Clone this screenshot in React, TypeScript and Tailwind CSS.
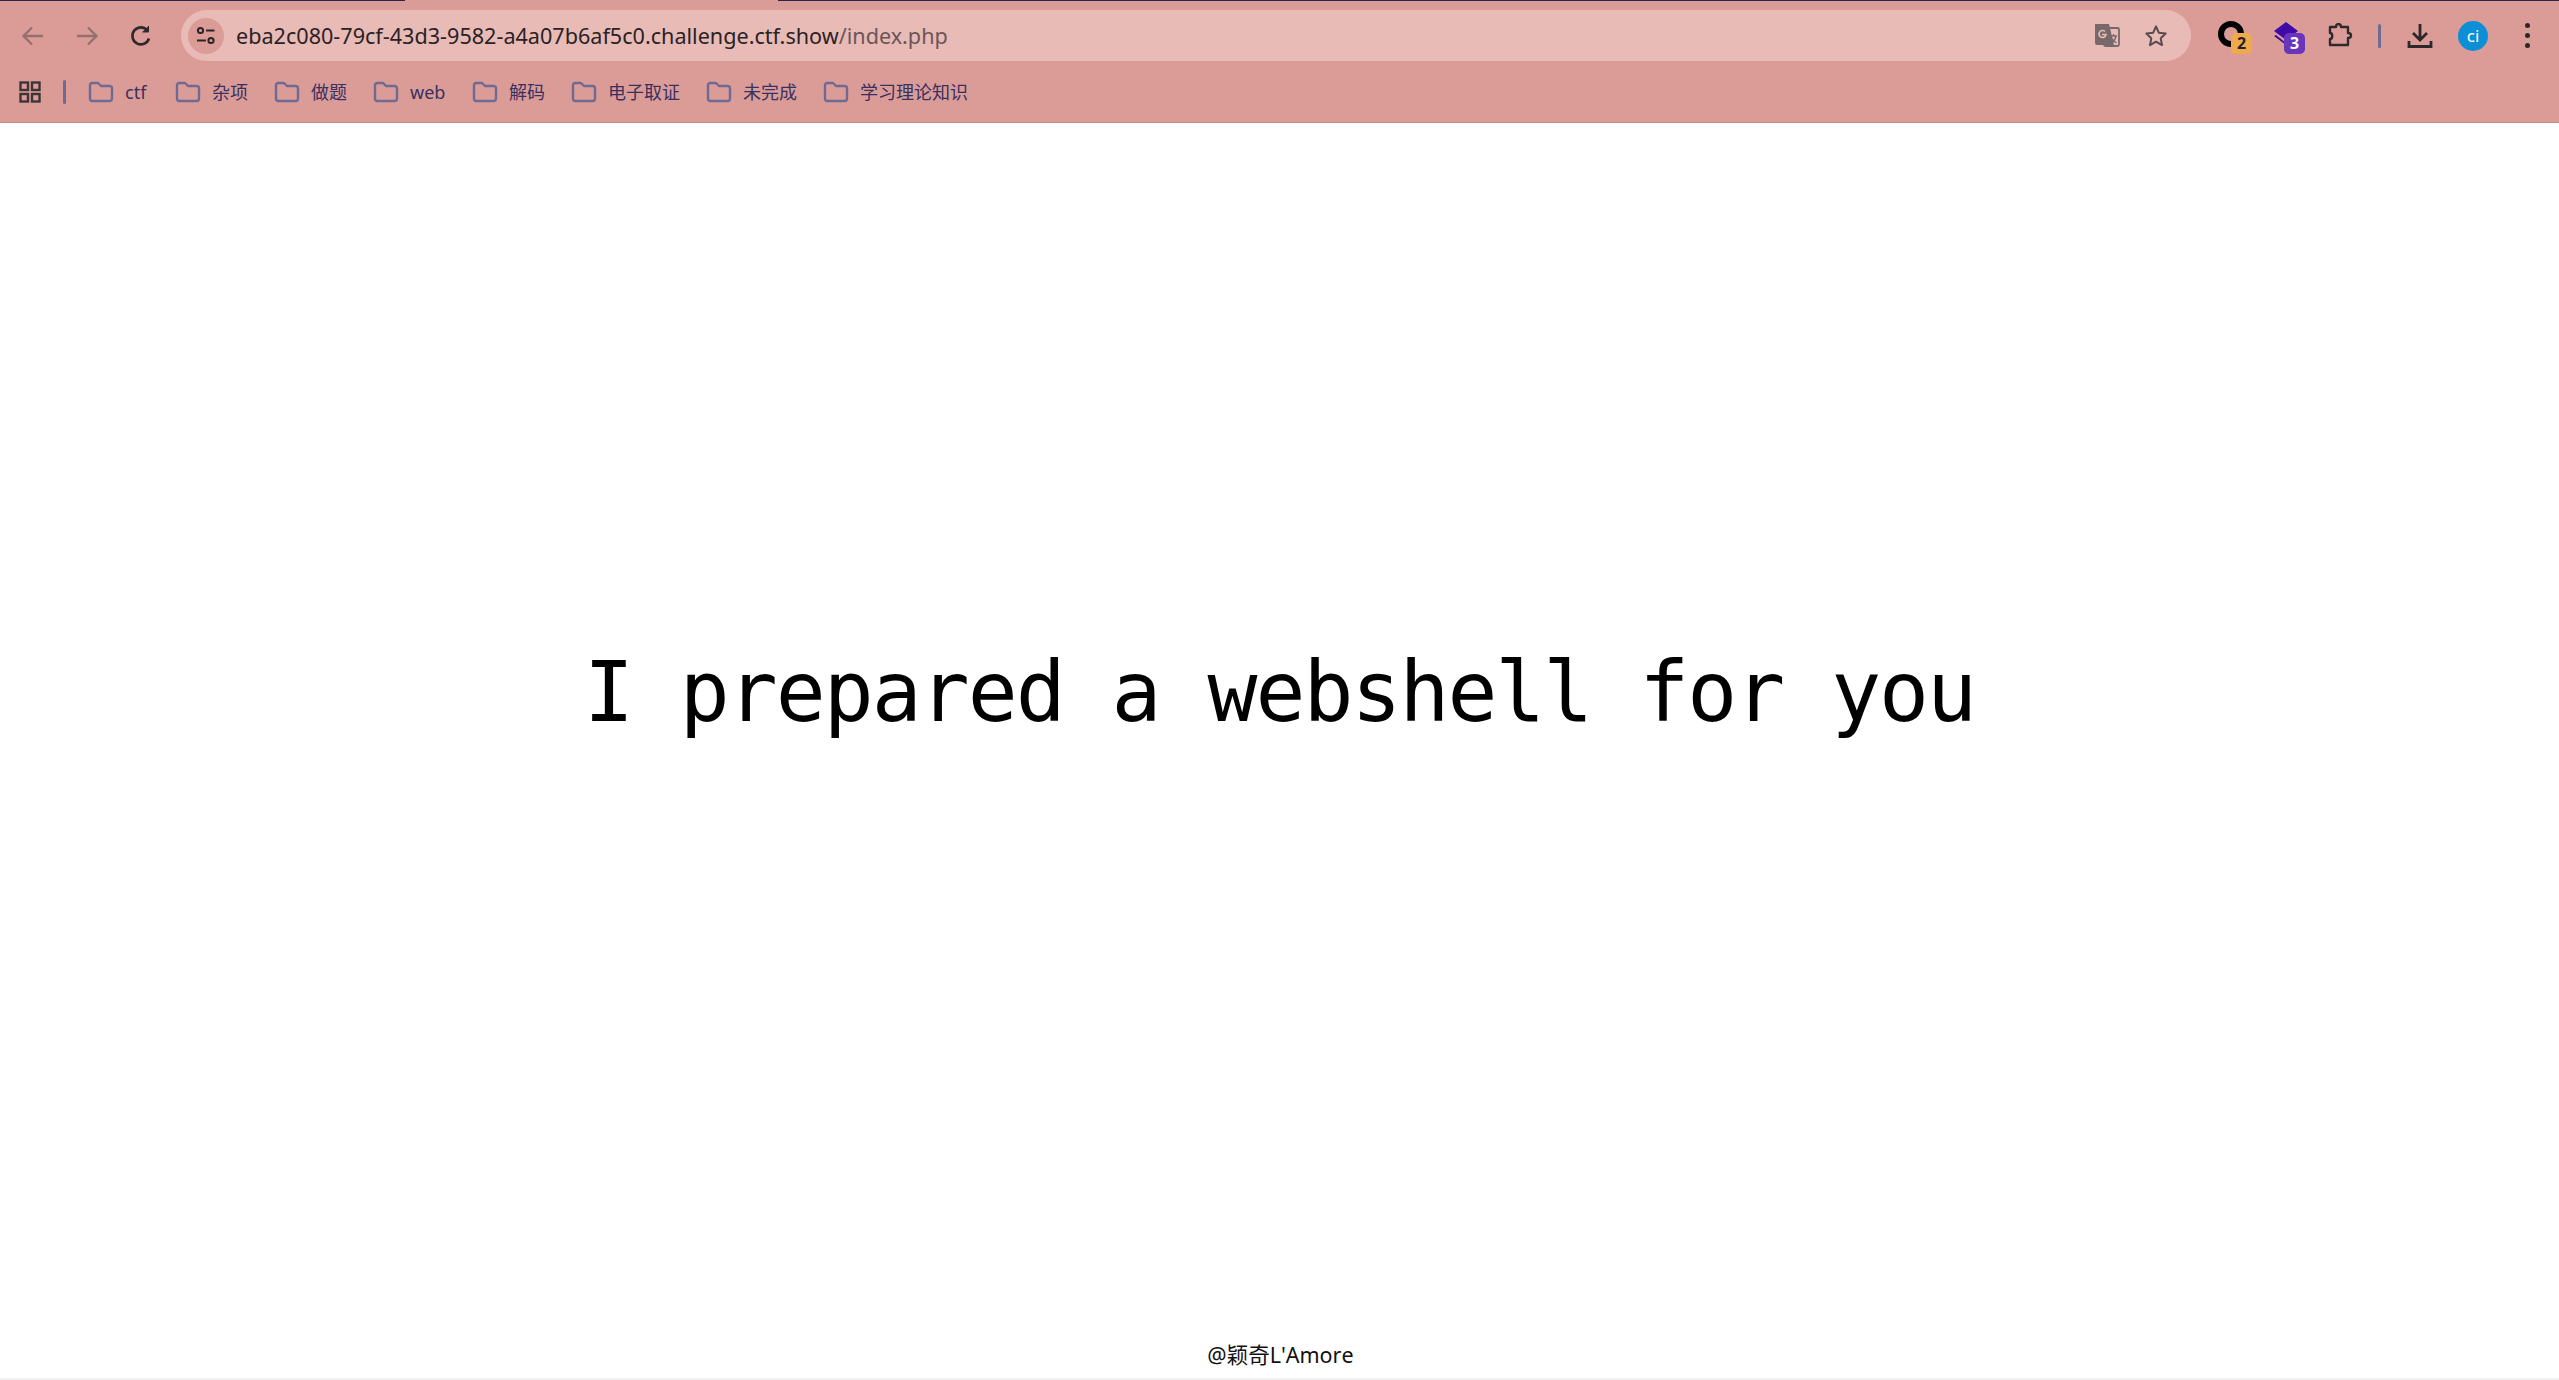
import React from 'react';

const FolderIcon = () => (
  <svg width="26" height="22" viewBox="0 0 26 22" fill="none" stroke="#6f6a92" strokeWidth="2.4" strokeLinejoin="round">
    <path d="M2 4.5C2 3 3 2 4.5 2H10l3 3h8.5C23 5 24 6 24 7.5v10c0 1.500-1 2.500-2.500 2.500h-17C3 20 2 19 2 17.500z" />
  </svg>
);

const Bookmark = ({ label, width }: { label: string; width: string }) => (
  <div className={`flex items-center gap-[11px] ${width}`}>
    <FolderIcon />
    <span className="pt-[2px] text-[18px] text-[#38305f]">{label}</span>
  </div>
);

const bookmarks = [
  { label: 'ctf', width: 'w-[87px]' },
  { label: '杂项', width: 'w-[99px]' },
  { label: '做题', width: 'w-[99px]' },
  { label: 'web', width: 'w-[99px]' },
  { label: '解码', width: 'w-[99px]' },
  { label: '电子取证', width: 'w-[135px]' },
  { label: '未完成', width: 'w-[117px]' },
  { label: '学习理论知识', width: 'w-[160px]' },
];

const Badge = ({ n, className }: { n: string; className: string }) => (
  <span className={`absolute top-[12px] flex h-[21px] w-[21px] items-center justify-center rounded-[5px] text-[16px] font-bold ${className}`}>
    {n}
  </span>
);

export default function App() {
  return (
    <div className="flex h-[1380px] flex-col bg-white font-['Noto_Sans','Noto_Sans_CJK_SC',sans-serif]">
      {/* browser chrome */}
      <div className="h-[123px] flex-none border-b border-[#c98585] bg-[#db9c98]">
        <div className="flex h-[1px]">
          <div className="w-[405px] bg-[#2a2450]" />
          <div className="w-[373px]" />
          <div className="flex-1 bg-[#2a2450]" />
        </div>
        <div className="flex h-[60px] items-center pt-[9px]">
          <div className="flex w-[181px] items-center pl-[20px]">
            <svg width="26" height="26" viewBox="0 0 26 26" fill="none" stroke="#96706e" strokeWidth="2.4">
              <path d="M23 13H4M12 4.500 3.500 13l8.500 8.500" />
            </svg>
            <svg className="ml-[28px]" width="26" height="26" viewBox="0 0 26 26" fill="none" stroke="#96706e" strokeWidth="2.4">
              <path d="M3 13h19M14 4.500 22.500 13 14 21.500" />
            </svg>
            <svg className="ml-[28px]" width="26" height="26" viewBox="0 0 26 26" fill="none" stroke="#2e2a2c" strokeWidth="2.600">
              <path d="M21 15.500A8.500 8.500 0 1 1 19.500 7.500" />
              <path d="M20.500 3v6h-6" fill="#2e2a2c" strokeWidth="1" />
            </svg>
          </div>

          <div className="flex h-[51px] w-[2010px] items-center rounded-full bg-[#e8bbb7] pl-[7px] pr-[23px]">
            <div className="flex h-[36px] w-[36px] items-center justify-center rounded-full bg-[#db9c98]">
              <svg width="20" height="20" viewBox="0 0 20 20" fill="none" stroke="#2a2526" strokeWidth="2">
                <circle cx="4.500" cy="4.500" r="2.600" />
                <path d="M10 4.500h8.500M1 14.500h9" />
                <circle cx="15" cy="14.500" r="2.600" />
              </svg>
            </div>
            <div className="ml-[12px] flex-1 text-[21.600px] leading-none text-[#2b2224]">
              eba2c080-79cf-43d3-9582-a4a07b6af5c0.challenge.ctf.show<span className="text-[#6d5557]">/index.php</span>
            </div>
            <svg width="26" height="26" viewBox="0 0 26 26">
              <rect x="10" y="5" width="15" height="18" rx="1.500" fill="none" stroke="#77686a" strokeWidth="1.800" />
              <path d="M1 1h14l5 21H3a2 2 0 0 1-2-2z" fill="#77686a" />
              <path d="M11 8.500a3.500 3.500 0 1 0 1 3H8" fill="none" stroke="#e8bbb7" strokeWidth="1.700" />
              <path d="M16 13h7M19.500 11v2M22 13c-1 4-3 6-5 7M17.500 15c1 2 3 4 5 5" fill="none" stroke="#77686a" strokeWidth="1.300" />
            </svg>
            <svg className="ml-[24px]" width="24" height="24" viewBox="0 0 24 24" fill="none" stroke="#5a4a4c" strokeWidth="2" strokeLinejoin="round">
              <path d="m12 2.500 2.900 6.300 6.800.8-5 4.700 1.300 6.800-6-3.400-6 3.400 1.300-6.800-5-4.700 6.800-.8z" />
            </svg>
          </div>

          <div className="ml-[27px] flex items-center">
            <div className="relative h-[30px] w-[30px]">
              <div className="h-[26px] w-[26px] rounded-full border-[6px] border-black" />
              <Badge n="2" className="left-[13px] bg-[#eeaa4c] text-[#222]" />
            </div>
            <div className="relative ml-[25px] h-[30px] w-[30px]">
              <svg width="26" height="26" viewBox="0 0 26 26">
                <path d="M13 1 25 10 13 19 1 10z" fill="#3f0aa8" />
                <path d="M3 14 13 22l10-8v4L13 24 1 15z" fill="#35118f" />
              </svg>
              <Badge n="3" className="left-[11px] bg-[#6a35bd] text-white" />
            </div>
            <svg className="ml-[24px]" width="26" height="26" viewBox="0 0 26 26" fill="none" stroke="#2f2b2d" strokeWidth="2.400" strokeLinejoin="round">
              <path d="M3 4h6c0-4 5-4 5 0h7v6c4 0 4 5 0 5v7H3v-6c3 0 3-6 0-6z" />
            </svg>
            <div className="ml-[25px] h-[24px] w-[3px] rounded bg-[#6f6a92]" />
            <svg className="ml-[26px]" width="26" height="26" viewBox="0 0 26 26" fill="none" stroke="#2c2829" strokeWidth="2.800">
              <path d="M13 1v15M6 10l7 7 7-7M2 18v5.500h22V18" />
            </svg>
            <div className="ml-[25px] flex h-[30px] w-[30px] items-center justify-center rounded-full bg-[#0c8fd6] text-[17px] text-white">
              ci
            </div>
            <div className="ml-[37px] flex flex-col gap-[5px]">
              <span className="h-[5px] w-[5px] rounded-full bg-[#2c2829]" />
              <span className="h-[5px] w-[5px] rounded-full bg-[#2c2829]" />
              <span className="h-[5px] w-[5px] rounded-full bg-[#2c2829]" />
            </div>
          </div>
        </div>

        {/* bookmarks bar */}
        <div className="flex h-[60px] items-center pl-[19px] pt-[1px]">
          <svg width="22" height="22" viewBox="0 0 22 22" fill="none" stroke="#3b3537" strokeWidth="2.400">
            <rect x="1.500" y="1.500" width="7.500" height="7.500" />
            <rect x="13" y="1.500" width="7.500" height="7.500" />
            <rect x="1.500" y="13" width="7.500" height="7.500" />
            <rect x="13" y="13" width="7.500" height="7.500" />
          </svg>
          <div className="ml-[22px] mr-[22px] h-[24px] w-[3px] rounded bg-[#6f6a92]" />
          {bookmarks.map((b) => (
            <Bookmark key={b.label} label={b.label} width={b.width} />
          ))}
        </div>
      </div>

      {/* page */}
      <div className="flex flex-1 items-center justify-center pb-[61px]">
        <h1 className="font-['DejaVu_Sans_Mono',monospace] text-[83px] font-normal leading-none tracking-[-2px] text-black">
          I prepared a webshell for you
        </h1>
      </div>
      <div className="flex h-[58px] flex-none justify-center border-b-2 border-[#f2f2f2] pt-[18px] pl-[2px] text-[21.500px] leading-[30px] text-[#111] [font-kerning:none]">
        @颖奇L'Amore
      </div>
    </div>
  );
}
